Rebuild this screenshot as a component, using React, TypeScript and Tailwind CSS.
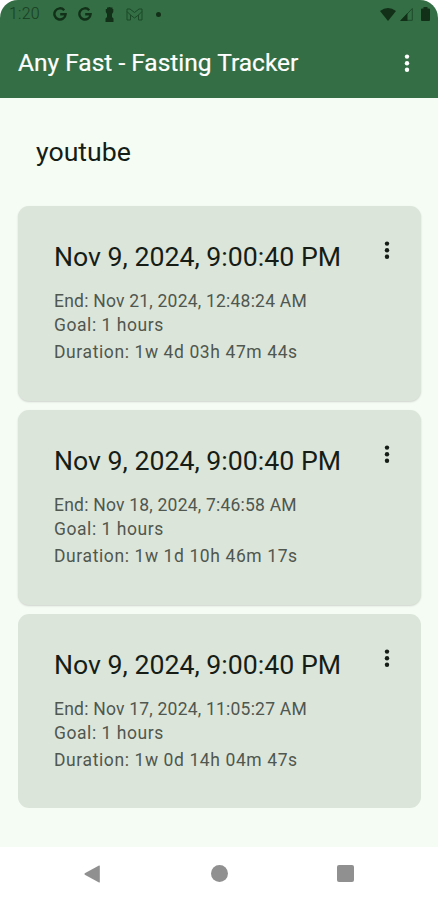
// Fast entry type
interface Fast {
  id: number;
  start: string;
  end: string;
  goal: string;
  duration: string;
}

const fasts: Fast[] = [
  {
    id: 1,
    start: "Nov 9, 2024, 9:00:40 PM",
    end: "Nov 21, 2024, 12:48:24 AM",
    goal: "1 hours",
    duration: "1w 4d 03h 47m 44s",
  },
  {
    id: 2,
    start: "Nov 9, 2024, 9:00:40 PM",
    end: "Nov 18, 2024, 7:46:58 AM",
    goal: "1 hours",
    duration: "1w 1d 10h 46m 17s",
  },
  {
    id: 3,
    start: "Nov 9, 2024, 9:00:40 PM",
    end: "Nov 17, 2024, 11:05:27 AM",
    goal: "1 hours",
    duration: "1w 0d 14h 04m 47s",
  },
];

const MoreIcon = () => (
  <svg width="6" height="20" viewBox="0 0 6 20" fill="currentColor">
    <circle cx="3" cy="3.6" r="2.2" />
    <circle cx="3" cy="10.2" r="2.2" />
    <circle cx="3" cy="16.8" r="2.2" />
  </svg>
);

const GoogleIcon = ({ className }: { className: string }) => (
  <svg className={className} width="14" height="14" viewBox="0 0 14 14" fill="none" stroke="currentColor" strokeWidth="2.4">
    <path d="M11.200 3.200A5.600 5.600 0 1 0 12.600 7.200H7.200" />
  </svg>
);

const StatusBar = () => (
  <div className="flex h-7 items-center justify-between pl-[9px] pr-2 text-[#123018]">
    <div className="flex items-center">
      <span className="w-11 text-[16px] font-light leading-7 tracking-[0.2px] text-[#183d22]">1:20</span>
      <GoogleIcon className="mr-[11px]" />
      <GoogleIcon className="mr-[13px]" />
      {/* Keyhole */}
      <svg className="mr-3" width="9" height="15" viewBox="0 0 9 15" fill="currentColor">
        <path d="M2 .5h1L4.500 0 6 .5h1.500v1.500h.8v3L7 7v3l1.500 1.500V15H.5v-3.500L2 10V7L.8 5V2H2z" />
      </svg>
      {/* Mail outline */}
      <svg className="mr-[13px]" width="17" height="13" viewBox="0 0 17 13" fill="none" stroke="#1b4827" strokeWidth="1">
        <path d="M1 1h3L8.500 4.500 13 1h3v11h-3.500V7L8.500 10 4.500 7v5H1zM1 3.500L4.500 7M16 3.500L12.500 7" />
      </svg>
      <span className="h-[5px] w-[5px] rounded-full bg-[#123018]" />
    </div>
    <div className="flex items-center">
      <svg className="mr-1" width="16" height="13" viewBox="0 0 16 13" fill="currentColor">
        <path d="M0 3Q8-3 16 3L8 13z" />
      </svg>
      <svg className="mr-2" width="13" height="14" viewBox="0 0 13 14">
        <path d="M1.200 13.300L12.300 1.500v11.800z" fill="none" stroke="#1f4a2a" strokeWidth="1" />
        <path d="M0 14L7.500 6V14z" fill="currentColor" />
      </svg>
      <svg width="9" height="14" viewBox="0 0 9 14" fill="currentColor">
        <path d="M2.500 0h4v1.500H8a1 1 0 0 1 1 1V13a1 1 0 0 1-1 1H1a1 1 0 0 1-1-1V2.500a1 1 0 0 1 1-1h1.500z" />
      </svg>
    </div>
  </div>
);

const FastCard = ({ fast }: { fast: Fast }) => (
  <div className="flex h-[195px] items-start justify-between rounded-[11px] bg-[#dce5da] pl-9 pr-[31px] pt-[34px] shadow-[0_1px_2px_rgba(0,0,0,0.16)] last:h-[194px] last:shadow-none">
    <div>
      <h2 className="whitespace-nowrap pt-px text-[26.700px] leading-8 text-[#161d17]">{fast.start}</h2>
      <div className="mt-4 whitespace-nowrap text-[17.500px] leading-6 text-[#4f574f]">
        <p className="tracking-[0.22px]">End: {fast.end}</p>
        <p className="tracking-[0.55px]">Goal: {fast.goal}</p>
        <p className="mt-[3px] tracking-[0.6px]">Duration: {fast.duration}</p>
      </div>
    </div>
    <button className="text-[#161d17]" aria-label="More">
      <MoreIcon />
    </button>
  </div>
);

const App = () => {
  return (
    <div className="h-[900px] w-[438px] overflow-hidden bg-white font-['Roboto',sans-serif]">
      <div className="flex h-full flex-col">
        <header className="h-[98px] rounded-t-[18px] bg-[#336e45]">
          <StatusBar />
          <div className="flex h-[70px] items-center justify-between pl-[18px] pr-7 text-white">
            <h1 className="whitespace-nowrap text-[24.500px] leading-8 [-webkit-text-stroke:0.2px_white]">
              Any Fast - Fasting Tracker
            </h1>
            <button aria-label="Menu">
              <MoreIcon />
            </button>
          </div>
        </header>
        <main className="flex-1 bg-[#f5fcf4] pl-[18px] pr-[17px]">
          <p className="pl-[18px] pt-[38px] text-[26.700px] leading-8 text-[#161d17]">youtube</p>
          <div className="mt-[38px] flex flex-col gap-[9px]">
            {fasts.map((fast) => (
              <FastCard key={fast.id} fast={fast} />
            ))}
          </div>
        </main>
        {/* System navigation */}
        <nav className="flex h-[53px] items-center justify-between bg-white pl-[84px] pr-[84px] text-[#909090]">
          <svg width="16" height="18" viewBox="0 0 16 18" fill="currentColor">
            <path d="M15 .5q.8-.3.8.6v15.800q0 .9-.8.500L.8 9.700Q0 9 .8 8.300z" />
          </svg>
          <span className="ml-px h-[17px] w-[17px] rounded-full bg-[#909090]" />
          <span className="h-[17px] w-[17px] rounded-[2px] bg-[#909090]" />
        </nav>
      </div>
    </div>
  );
};

export default App;
